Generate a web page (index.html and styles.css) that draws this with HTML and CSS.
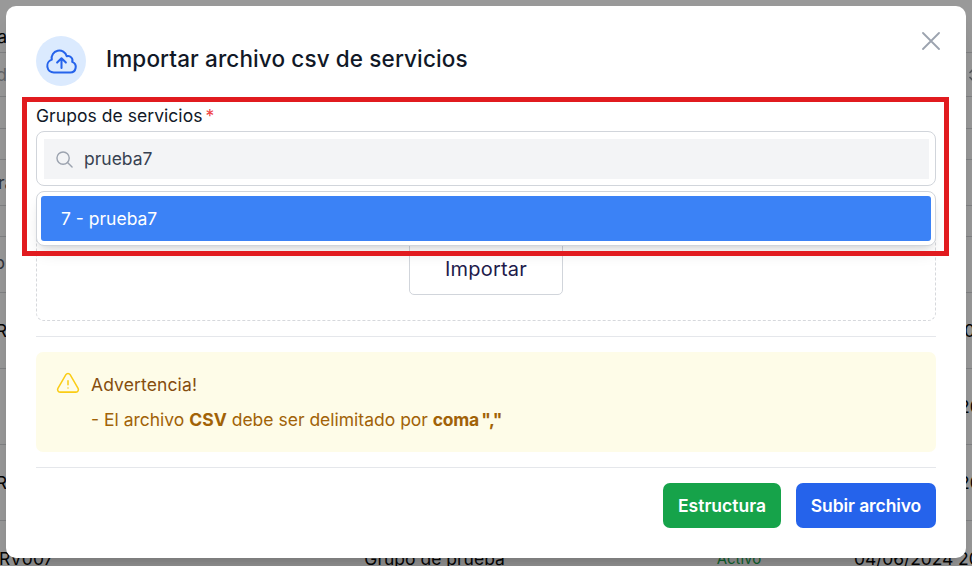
FILE: index.html
```html
<!DOCTYPE html>
<html lang="es">
<head>
<meta charset="utf-8">
<title>Importar archivo csv de servicios</title>
<link rel="stylesheet" href="styles.css">
</head>
<body>
<div class="page">
  <div class="row h53"><span class="left">a</span></div>
  <div class="row h44"><span class="left muted">d</span><svg class="sort" width="9" height="14" viewBox="0 0 9 14"><path d="M1 4.5 4.5 1 8 4.5M1 9.5 4.5 13 8 9.5"/></svg></div>
  <div class="row h32"></div>
  <div class="row h31"></div>
  <div class="row h46"><span class="left slate start">ra</span></div>
  <div class="row h31"></div>
  <div class="row h56"><span class="left slate round">o</span></div>
  <div class="row h76"><span class="left">R</span><span class="right">0</span></div>
  <div class="row h76"><span class="right wide">20</span></div>
  <div class="row h76"><span class="left">R</span><span class="right wide">20</span></div>
  <div class="row h76 record"><span>RV007</span><span>Grupo de prueba</span><span class="active">Activo</span><span>04/06/2024 20</span></div>
</div>
<div class="overlay">
  <section class="modal">
    <header class="head">
      <span class="badge"><svg width="35" height="35" viewBox="0 0 24 24"><path d="M12 16.5V9.75m0 0 3 3m-3-3-3 3M6.75 19.5a4.5 4.5 0 0 1-1.41-8.775 5.25 5.25 0 0 1 10.233-2.33 3 3 0 0 1 3.758 3.848A3.752 3.752 0 0 1 18 19.5H6.75Z"/></svg></span>
      <h1>Importar archivo csv de servicios</h1>
      <svg class="close" width="18" height="18" viewBox="0 0 18 18"><path d="M1 1 17 17M17 1 1 17"/></svg>
    </header>
    <label class="label">Grupos de servicios<span class="star">*</span></label>
    <div class="field">
      <div class="search">
        <svg width="17" height="17" viewBox="0 0 18 18"><circle cx="7.5" cy="7.5" r="6.5"/><path d="m12.2 12.2 4.8 4.8"/></svg>
        <span>prueba7</span>
      </div>
      <div class="menu"><div class="option">7 - prueba7</div></div>
      <div class="highlight"></div>
    </div>
    <div class="drop"><button class="import">Importar</button></div>
    <hr>
    <div class="warning">
      <svg width="26" height="26" viewBox="0 0 24 24"><path d="M12 9v3.75m-9.303 3.376c-.866 1.5.217 3.374 1.948 3.374h14.71c1.73 0 2.813-1.874 1.948-3.374L13.949 3.378c-.866-1.5-3.032-1.5-3.898 0L2.697 16.126ZM12 15.75h.007v.008H12v-.008Z"/></svg>
      <div>
        <p class="wtitle">Advertencia!</p>
        <p class="wtext">- El archivo <b>CSV</b> debe ser delimitado por <b class="comma">coma ","</b></p>
      </div>
    </div>
    <hr>
    <footer class="actions">
      <button class="btn green">Estructura</button>
      <button class="btn blue">Subir archivo</button>
    </footer>
  </section>
</div>
</body>
</html>
```
FILE: styles.css
```css
* { box-sizing: border-box; }
body { margin: 0; width: 972px; height: 566px; overflow: hidden; position: relative; background: #999; font-family: Inter, "Liberation Sans", sans-serif; font-size: 17.5px; }
h1, p { margin: 0; }
button { font: inherit; }
svg { fill: none; stroke-linecap: round; stroke-linejoin: round; flex: none; }
.page { height: 566px; overflow: hidden; color: #050505; }
.row { display: flex; align-items: center; justify-content: space-between; border-bottom: 1px solid #818284; white-space: nowrap; }
.left { width: 7px; display: flex; justify-content: flex-end; }
.start { justify-content: flex-start; margin-left: -2px; }
.round { width: 5px; padding-bottom: 4px; }
.right { width: 8px; margin-left: auto; }
.wide { width: 13px; }
.muted { color: #65676b; }
.slate { color: #30343b; }
.sort { stroke: #55585d; stroke-width: 1.7; margin-right: -6px; }
.h53 { height: 53px; padding-top: 20px; }
.h44 { height: 44px; }
.h32 { height: 32px; }
.h31 { height: 31px; }
.h46 { height: 46px; }
.h56 { height: 56px; }
.h76 { height: 76px; }
.record { display: grid; grid-template-columns: 363px 352px 137px 118px; padding-left: 1px; }
.record span:first-child { margin-left: -2px; }
.record span:last-child { letter-spacing: -.1px; }
.active { color: #0d652f; font-size: 15px; }
.overlay { position: absolute; inset: 0; padding: 6px; }
.modal { width: 960px; height: 552px; background: #fff; border-radius: 10px; padding: 30px; box-shadow: 0 20px 25px -5px rgba(0,0,0,.13), 0 8px 10px -6px rgba(0,0,0,.13); }
.head { display: flex; height: 50px; align-items: center; gap: 20px; }
.badge { width: 50px; height: 50px; border-radius: 50%; background: #dbeafe; display: grid; place-items: center; }
.badge svg { stroke: #2563eb; stroke-width: 1.4; }
h1 { font-size: 22.5px; line-height: 30px; font-weight: 500; letter-spacing: .12px; color: #111827; white-space: nowrap; margin-bottom: 4px; }
.close { margin-left: auto; margin-right: -4px; margin-bottom: 40px; stroke: #9ca3af; stroke-width: 1.8; }
.label { display: block; height: 25px; line-height: 25px; margin: 17px 0 3px; letter-spacing: .05px; color: #111827; }
.star { color: #ef4444; margin-left: 3px; }
.field { position: relative; height: 55px; border: 1px solid #d1d5db; border-radius: 8px; padding: 7px; }
.search { height: 40px; background: #f3f4f6; display: flex; align-items: center; gap: 11px; padding-left: 12px; width: 885px; color: #374151; }
.search span { margin-bottom: 2px; }
.search svg { stroke: #9ca3af; stroke-width: 1.5; }
.menu { position: absolute; left: -1px; top: 59px; width: 900px; height: 55px; padding: 4px; border: 1px solid #d1d5db; border-radius: 8px; background: #fff; box-shadow: 0 10px 15px -3px rgba(0,0,0,.1), 0 4px 6px -4px rgba(0,0,0,.1); }
.option { height: 45px; line-height: 45px; padding-left: 20px; border-radius: 3px; background: #3b82f6; color: #fff; }
.highlight { position: absolute; left: -15px; top: -35px; width: 927px; height: 159px; border: 5px solid #e11b1f; }
.drop { height: 116px; margin-top: 19px; border: 1px dashed #d6d8dc; border-radius: 8px; display: flex; justify-content: center; align-items: flex-end; padding-bottom: 25px; }
.import { width: 154px; height: 54px; background: #fff; border: 1px solid #d1d5db; border-radius: 5px; color: #1e1b4b; font-size: 20px; letter-spacing: .2px; padding: 2px 0 0; }
hr { border: 0; border-top: 1px solid #e5e7eb; margin: 15px 0; }
.warning { height: 100px; background: #fefce8; border-radius: 7px; padding: 19px; display: flex; gap: 10px; line-height: 25px; }
.warning svg { stroke: #facc15; stroke-width: 1.4; }
.wtitle { color: #854d0e; margin-top: 1px; letter-spacing: .12px; }
.wtext { color: #a16207; margin-top: 10px; white-space: nowrap; }
.comma { letter-spacing: -.3px; word-spacing: -1.5px; }
.actions { display: flex; justify-content: flex-end; gap: 15px; }
.btn { height: 45px; border: 0; border-radius: 7px; color: #fff; font-weight: 600; letter-spacing: -.1px; padding: 0; white-space: nowrap; }
.green { background: #16a34a; width: 118px; letter-spacing: 0; }
.blue { background: #2563eb; width: 140px; }
```
